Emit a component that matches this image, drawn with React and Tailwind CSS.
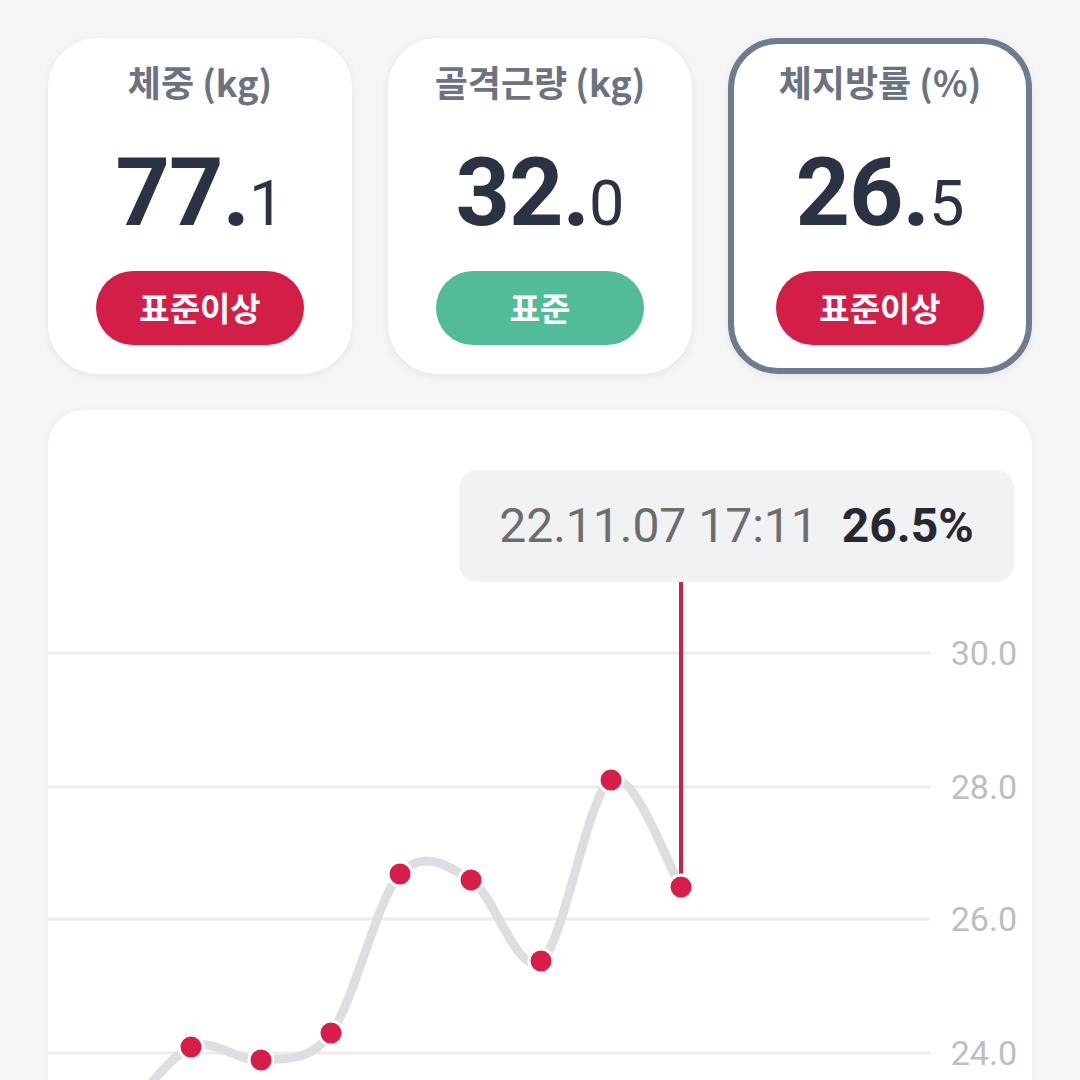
const cards = [
  { title: "체중 (kg)", int: "77.", dec: "1", status: "표준이상", tone: "red", active: false },
  { title: "골격근량 (kg)", int: "32.", dec: "0", status: "표준", tone: "green", active: false },
  { title: "체지방률 (%)", int: "26.", dec: "5", status: "표준이상", tone: "red", active: true },
];

// chart points in panel coordinates
const points = [
  [73, 710],
  [143, 637],
  [213, 650],
  [283, 623],
  [352, 464],
  [423, 470],
  [493, 551],
  [563, 370],
  [633, 477],
];

function splinePath(pts) {
  let d = `M${pts[0][0]},${pts[0][1]}`;
  for (let i = 0; i < pts.length - 1; i++) {
    const p0 = pts[i - 1] || pts[i];
    const p1 = pts[i];
    const p2 = pts[i + 1];
    const p3 = pts[i + 2] || p2;
    const c1x = p1[0] + (p2[0] - p0[0]) / 6;
    const c1y = p1[1] + (p2[1] - p0[1]) / 6;
    const c2x = p2[0] - (p3[0] - p1[0]) / 6;
    const c2y = p2[1] - (p3[1] - p1[1]) / 6;
    d += ` C${c1x},${c1y} ${c2x},${c2y} ${p2[0]},${p2[1]}`;
  }
  return d;
}

const gridLines = [
  { y: 243, label: "30.0" },
  { y: 377, label: "28.0" },
  { y: 509, label: "26.0" },
  { y: 643, label: "24.0" },
];

function StatCard({ card }) {
  return (
    <div
      className={`flex h-[336px] flex-col items-center rounded-[50px] border-[6px] bg-white shadow-[0_2px_10px_rgba(0,0,0,0.08)] ${
        card.active ? "border-[#6e7c8f]" : "border-white"
      }`}
    >
      <p className="mt-[15px] text-[36px] font-bold leading-[44px] text-[#6b7380] [font-family:'Noto_Sans_CJK_KR','Noto_Sans',sans-serif]">
        {card.title}
      </p>
      <p className="mt-[40px] flex items-baseline leading-[100px] text-[#2b3244] [font-family:Roboto,sans-serif]">
        <span className="text-[95px] font-bold tracking-[-1px]">{card.int}</span>
        <span className="text-[63px] font-normal">{card.dec}</span>
      </p>
      <div
        className={`mt-[17px] flex h-[74px] w-[208px] items-center justify-center rounded-full text-[33px] font-bold text-white [font-family:'Noto_Sans_CJK_KR',sans-serif] ${
          card.tone === "red" ? "bg-[#d31e48]" : "bg-[#52bb97]"
        }`}
      >
        {card.status}
      </div>
    </div>
  );
}

export default function App() {
  return (
    <div className="h-[1080px] overflow-hidden bg-[#f6f6f6] px-[48px] pt-[38px]">
      <div className="grid grid-cols-3 gap-[36px]">
        {cards.map((c) => (
          <StatCard key={c.title} card={c} />
        ))}
      </div>

      <div className="relative mt-[36px] h-[720px] overflow-hidden rounded-[36px] bg-white shadow-[0_2px_10px_rgba(0,0,0,0.06)]">
        <svg width="984" height="720" className="absolute left-0 top-0">
          {gridLines.map((g) => (
            <g key={g.label}>
              <line x1="0" x2="882" y1={g.y} y2={g.y} stroke="#ececee" strokeWidth="3" />
              <text
                x="969"
                y={g.y + 12}
                textAnchor="end"
                fontSize="34"
                fill="#bcbec2"
                fontFamily="Roboto, sans-serif"
              >
                {g.label}
              </text>
            </g>
          ))}
          <path d={splinePath(points)} fill="none" stroke="#dcdee1" strokeWidth="9" strokeLinecap="round" />
          <line x1="633" x2="633" y1="172" y2="470" stroke="#c3244a" strokeWidth="4" />
          {points.map(([x, y], i) => (
            <circle key={i} cx={x} cy={y} r="12" fill="#d81e48" stroke="#ffffff" strokeWidth="3" />
          ))}
        </svg>

        <div className="absolute left-[411px] top-[60px] flex h-[112px] w-[555px] items-center justify-center gap-[24px] rounded-[18px] bg-[#f1f2f4] text-[48px] leading-none [font-family:Roboto,sans-serif]">
          <span className="font-normal text-[#6d6d6f]">22.11.07 17:11</span>
          <span className="font-bold text-[#26292f]">26.5%</span>
        </div>
      </div>
    </div>
  );
}
